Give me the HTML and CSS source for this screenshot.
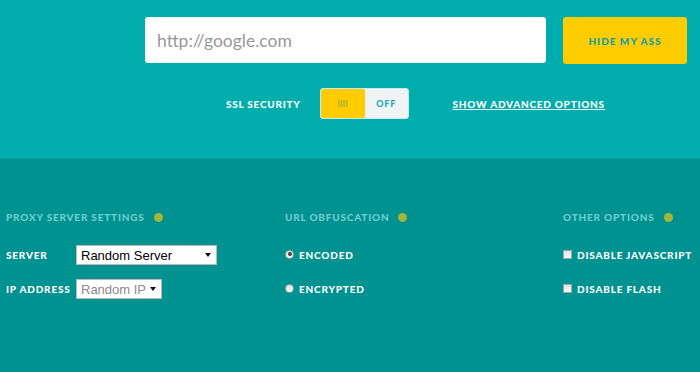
FILE: index.html
```html
<!DOCTYPE html>
<html lang="en">
<head>
    <meta charset="UTF-8">
    <title>Hide My Ass - Web Proxy</title>
    <link rel="stylesheet" href="styles.css">
</head>
<body>
    <div class="top-section">
        <form class="url-form">
            <input class="url-input" type="text" placeholder="http://google.com">
            <button class="hide-button" type="button">HIDE MY ASS</button>
        </form>
        <div class="ssl-row">
            <span class="ssl-label">SSL SECURITY</span>
            <div class="ssl-toggle">
                <span class="toggle-on">IIII</span>
                <span class="toggle-off">OFF</span>
            </div>
            <a class="advanced-link" href="#">SHOW ADVANCED OPTIONS</a>
        </div>
    </div>

    <div class="options-section">
        <div class="option-col">
            <h4 class="option-title">PROXY SERVER SETTINGS <span class="dot"></span></h4>
            <div class="option-row">
                <label class="field-label">SERVER</label>
                <span class="select-wrap server-select"><span class="select-text">Random Server</span></span>
            </div>
            <div class="option-row">
                <label class="field-label">IP ADDRESS</label>
                <span class="select-wrap ip-select"><span class="select-text disabled">Random IP</span></span>
            </div>
        </div>
        <div class="option-col">
            <h4 class="option-title">URL OBFUSCATION <span class="dot"></span></h4>
            <div class="option-row">
                <span class="radio checked"></span>
                <label class="field-label">ENCODED</label>
            </div>
            <div class="option-row">
                <span class="radio"></span>
                <label class="field-label">ENCRYPTED</label>
            </div>
        </div>
        <div class="option-col">
            <h4 class="option-title">OTHER OPTIONS <span class="dot"></span></h4>
            <div class="option-row">
                <span class="checkbox"></span>
                <label class="field-label">DISABLE JAVASCRIPT</label>
            </div>
            <div class="option-row">
                <span class="checkbox"></span>
                <label class="field-label">DISABLE FLASH</label>
            </div>
        </div>
    </div>
</body>
</html>
```

FILE: styles.css
```css
body {
    margin: 0;
    background: #009191;
    font-family: Lato, "Open Sans", sans-serif;
    color: white;
    height: 372px;
    overflow: hidden;
}

.top-section {
    background: #00adad;
    height: 159px;
    border-bottom: 1px solid #03a1a1;
    box-sizing: border-box;
    padding-top: 17px;
}

.url-form {
    display: flex;
    gap: 17px;
    padding-left: 145px;
    margin: 0;
}

.url-input {
    width: 401px;
    height: 46px;
    box-sizing: border-box;
    border: none;
    border-radius: 3px;
    padding: 0 12px;
    font-family: Lato, sans-serif;
    font-size: 17.5px;
    color: #333;
}

.url-input::placeholder {
    color: #999;
}

.hide-button {
    width: 124px;
    height: 47px;
    background: #ffcc00;
    border: none;
    border-radius: 3px;
    color: #0b9fa6;
    font-family: Lato, sans-serif;
    font-weight: 900;
    font-size: 10px;
    letter-spacing: 1px;
}

.ssl-row {
    display: flex;
    align-items: center;
    margin-top: 24px;
    padding-left: 226px;
}

.ssl-label,
.advanced-link {
    font-weight: 900;
    font-size: 10px;
    letter-spacing: 0.75px;
    color: white;
}

.ssl-toggle {
    display: flex;
    width: 89px;
    height: 31px;
    margin-left: 19px;
    box-sizing: border-box;
    border: 1px solid #cfe7e8;
    border-radius: 3px;
    background: #f0f4f6;
    overflow: hidden;
}

.toggle-on {
    width: 44px;
    background: #ffcc00;
    color: #a3b238;
    font-size: 9px;
    font-weight: 700;
    display: flex;
    align-items: center;
    justify-content: center;
    border-radius: 2px;
}

.toggle-off {
    flex: 1;
    color: #2aa9ac;
    font-size: 9px;
    font-weight: 900;
    letter-spacing: 0.8px;
    display: flex;
    align-items: center;
    justify-content: center;
}

.advanced-link {
    margin-left: 44px;
    text-decoration: underline;
}

.options-section {
    display: grid;
    grid-template-columns: 279px 278px 1fr;
    padding: 52px 0 0 6px;
}

.option-title {
    margin: 0 0 21px;
    font-size: 10px;
    font-weight: 900;
    letter-spacing: 0.8px;
    color: #6fcfcf;
    display: flex;
    align-items: center;
    height: 12px;
}

.dot {
    width: 9px;
    height: 9px;
    border-radius: 50%;
    background: #a2b735;
    margin-left: 9px;
}

.option-row {
    display: flex;
    align-items: center;
    height: 22px;
    margin-bottom: 12px;
}

.field-label {
    font-size: 10px;
    font-weight: 900;
    letter-spacing: 0.8px;
    color: white;
}

.option-row .field-label:first-child {
    width: 70px;
}

.select-wrap {
    position: relative;
    display: flex;
    align-items: center;
    height: 20px;
    box-sizing: border-box;
    background: white;
    border: 1px solid #b9b9b9;
    padding-left: 4px;
    font-family: "Liberation Sans", Arial, sans-serif;
    font-size: 13px;
    color: black;
}

.server-select {
    width: 141px;
}

.ip-select {
    width: 86px;
}

.select-text.disabled {
    color: #8a8a8a;
}

.select-wrap::after {
    content: "";
    position: absolute;
    right: 5px;
    top: 7px;
    border-left: 3px solid transparent;
    border-right: 3px solid transparent;
    border-top: 4px solid #111;
}

.radio,
.checkbox {
    width: 9px;
    height: 9px;
    box-sizing: border-box;
    background: linear-gradient(#e2e2e2, #f8f8f8);
    border: 1px solid #9aa;
    margin-right: 5px;
    position: relative;
    top: -1px;
}

.radio {
    border-radius: 50%;
}

.radio.checked::after {
    content: "";
    position: absolute;
    left: 1.5px;
    top: 1.5px;
    width: 4px;
    height: 4px;
    border-radius: 50%;
    background: #444;
}
```
